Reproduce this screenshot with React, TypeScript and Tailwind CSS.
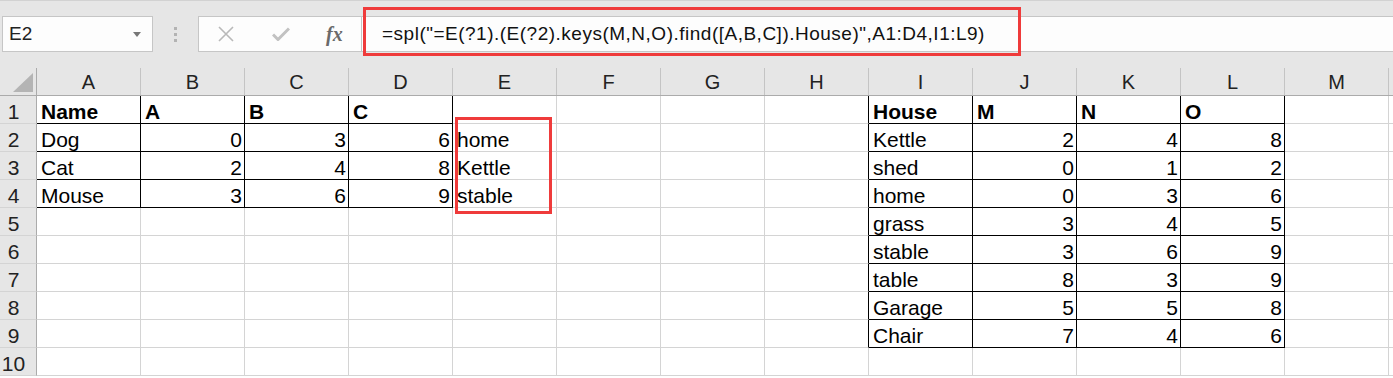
import { Fragment } from 'react'

type Cell = { v: string; b?: boolean; n?: boolean }

const COLS = ['A', 'B', 'C', 'D', 'E', 'F', 'G', 'H', 'I', 'J', 'K', 'L', 'M']
const ROWS = [1, 2, 3, 4, 5, 6, 7, 8, 9, 10]

const FORMULA = '=spl("=E(?1).(E(?2).keys(M,N,O).find([A,B,C]).House)",A1:D4,I1:L9)'

const left: (string | number)[][] = [
  ['Name', 'A', 'B', 'C'],
  ['Dog', 0, 3, 6],
  ['Cat', 2, 4, 8],
  ['Mouse', 3, 6, 9],
]
const right: (string | number)[][] = [
  ['House', 'M', 'N', 'O'],
  ['Kettle', 2, 4, 8],
  ['shed', 0, 1, 2],
  ['home', 0, 3, 6],
  ['grass', 3, 4, 5],
  ['stable', 3, 6, 9],
  ['table', 8, 3, 9],
  ['Garage', 5, 5, 8],
  ['Chair', 7, 4, 6],
]
const result = ['home', 'Kettle', 'stable']

// sheet[row][col], rows 1-based
const sheet: Record<string, Cell> = {}
left.forEach((r, i) =>
  r.forEach((v, j) => {
    sheet[`${i + 1}:${j}`] = { v: String(v), b: i === 0, n: typeof v === 'number' }
  })
)
right.forEach((r, i) =>
  r.forEach((v, j) => {
    sheet[`${i + 1}:${j + 8}`] = { v: String(v), b: i === 0, n: typeof v === 'number' }
  })
)
result.forEach((v, i) => {
  sheet[`${i + 2}:4`] = { v }
})

const inTable = (r: number, c: number) =>
  (r >= 1 && r <= 4 && c >= 0 && c <= 3) || (r >= 1 && r <= 9 && c >= 8 && c <= 11)

function FormulaBar() {
  return (
    <div className="relative h-[68px] border-t border-[#d2d2d2] bg-[#e6e6e6]">
      <div className="flex items-start pt-[15px]">
        <div className="ml-[2px] flex h-[36px] w-[151px] items-center justify-between border border-[#c6c6c6] bg-[#fdfdfd] pl-[6px] pr-[11px] text-[19px] text-[#222]">
          <span>E2</span>
          <svg width="8" height="5" viewBox="0 0 8 5">
            <path d="M0 0h8L4 5z" fill="#777" />
          </svg>
        </div>
        <div className="flex h-[36px] w-[45px] flex-col items-center justify-center gap-[3px]">
          <div className="h-[3px] w-[3px] bg-[#b3b3b3]" />
          <div className="h-[3px] w-[3px] bg-[#b3b3b3]" />
          <div className="h-[3px] w-[3px] bg-[#b3b3b3]" />
        </div>
        <div className="flex h-[36px] w-[164px] items-center border border-[#c6c6c6] bg-[#fdfdfd]">
          <svg className="ml-[19px]" width="16" height="16" viewBox="0 0 16 16">
            <path d="M1 1l14 14M15 1L1 15" stroke="#b9b9b9" strokeWidth="1.6" />
          </svg>
          <svg className="ml-[38px]" width="18" height="14" viewBox="0 0 18 14">
            <path d="M1 7.5l5 5L17 1.5" stroke="#c2c2c2" strokeWidth="3" fill="none" />
          </svg>
          <span className="ml-[36px] font-['Liberation_Serif',serif] text-[20px] font-bold italic text-[#6a6a6a]">
            fx
          </span>
        </div>
        <div className="flex h-[36px] flex-1 items-center border-y border-[#c6c6c6] bg-[#fdfdfd] pl-[20px] text-[19px] tracking-[0.5px] text-[#111]">
          {FORMULA}
        </div>
      </div>
      <div className="absolute left-[363px] top-[6px] h-[49px] w-[658px] border-[3px] border-[#ef3b3b]" />
    </div>
  )
}

function HeaderRow() {
  return (
    <div className="flex h-[28px] border-b border-[#ababab] bg-[#e6e6e6]">
      <div className="relative w-[37px] shrink-0 border-r border-[#ababab]">
        <svg className="absolute left-0 top-0" width="36" height="27" viewBox="0 0 36 27">
          <path d="M33 5v19H13z" fill="#b4b4b4" />
        </svg>
      </div>
      {COLS.map((c) => (
        <div
          key={c}
          className="flex w-[104px] shrink-0 items-center justify-center border-r border-[#c4c4c4] text-[20px] leading-none text-[#222]"
        >
          {c}
        </div>
      ))}
      <div className="w-[20px] shrink-0" />
    </div>
  )
}

function SheetRow({ r }: { r: number }) {
  return (
    <div className="flex h-[28px]">
      <div className="flex w-[37px] shrink-0 items-end justify-center border-r border-b border-r-[#ababab] border-b-[#d4d4d4] bg-[#e6e6e6] pb-[1px] pr-[9px] text-[21px] leading-[21px] text-[#222]">
        {r}
      </div>
      {COLS.map((_, c) => {
        const cell = sheet[`${r}:${c}`]
        const blackRight = inTable(r, c) || inTable(r, c + 1)
        const blackBottom = inTable(r, c)
        return (
          <div
            key={c}
            className={[
              'flex w-[104px] shrink-0 items-end overflow-visible whitespace-nowrap border-r border-b px-[4px] pb-[1px] text-[21px] leading-[21px] text-black',
              blackRight ? 'border-r-black' : 'border-r-[#d4d4d4]',
              blackBottom ? 'border-b-black' : 'border-b-[#d4d4d4]',
              cell?.n ? 'justify-end pr-[2px]' : 'justify-start',
              cell?.b ? 'font-bold' : '',
            ].join(' ')}
          >
            {cell?.v}
          </div>
        )
      })}
      <div className="w-[20px] shrink-0 border-b border-[#d4d4d4]" />
    </div>
  )
}

export default function App() {
  return (
    <div className="relative h-[378px] w-[1393px] overflow-hidden bg-white font-['Liberation_Sans',Arial,sans-serif]">
      <FormulaBar />
      <HeaderRow />
      {ROWS.map((r) => (
        <Fragment key={r}>
          <SheetRow r={r} />
        </Fragment>
      ))}
      <div className="absolute left-[455px] top-[117px] h-[97px] w-[97px] border-[3px] border-[#ef3b3b]" />
    </div>
  )
}
